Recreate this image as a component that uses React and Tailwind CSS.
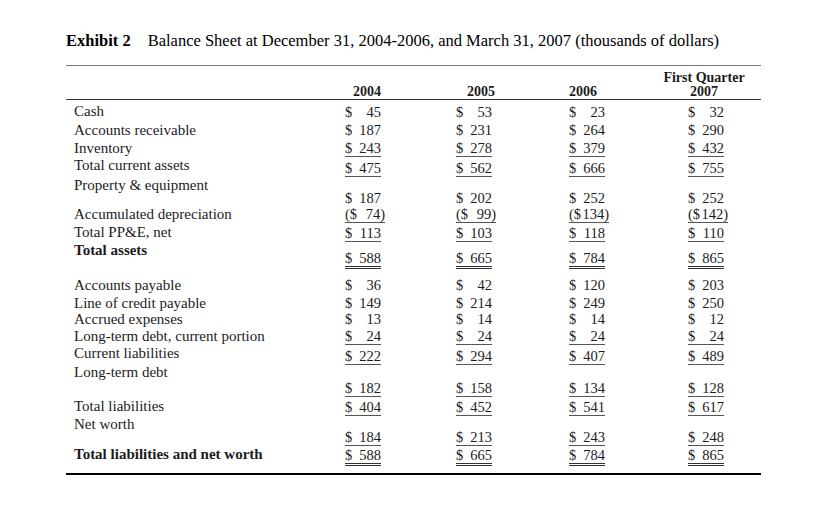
const rows = [
  { label: 'Cash', vals: ['45', '53', '23', '32'], row: 'h-[21px]', lt: 'mt-[3px]', vt: 'mt-[4px]' },
  { label: 'Accounts receivable', vals: ['187', '231', '264', '290'], row: 'h-[18px]', lt: 'mt-[1px]', vt: 'mt-[1px]' },
  { label: 'Inventory', vals: ['243', '278', '379', '432'], ul: 1, row: 'h-[18px]', lt: 'mt-[1px]', vt: 'mt-[1px]' },
  { label: 'Total current assets', vals: ['475', '562', '666', '755'], ul: 1, row: 'h-[19px]', lt: 'mt-[0px]', vt: 'mt-[3px]' },
  { label: 'Property & equipment', row: 'h-[14px]', lt: 'mt-[1px]' },
  { vals: ['187', '202', '252', '252'], row: 'h-[15px]', vt: 'mt-[0px]' },
  { label: 'Accumulated depreciation', vals: ['-\u00a074', '-\u00a099', '-134', '-142'], ul: 1, row: 'h-[18px]', lt: 'mt-[1px]', vt: 'mt-[1px]' },
  { label: 'Total PP&E, net', vals: ['113', '103', '118', '110'], ul: 1, row: 'h-[18px]', lt: 'mt-[1px]', vt: 'mt-[2px]' },
  { label: 'Total assets', bold: true, vals: ['588', '665', '784', '865'], ul: 2, row: 'h-[35px]', lt: 'mt-[1px]', vt: 'mt-[9px]' },
  { label: 'Accounts payable', vals: ['36', '42', '120', '203'], row: 'h-[18px]', lt: 'mt-[1px]', vt: 'mt-[1px]' },
  { label: 'Line of credit payable', vals: ['149', '214', '249', '250'], row: 'h-[17px]', lt: 'mt-[1px]', vt: 'mt-[1px]' },
  { label: 'Accrued expenses', vals: ['13', '14', '14', '12'], row: 'h-[16px]', lt: 'mt-[0px]', vt: 'mt-[0px]' },
  { label: 'Long-term debt, current portion', vals: ['24', '24', '24', '24'], ul: 1, row: 'h-[18px]', lt: 'mt-[1px]', vt: 'mt-[1px]' },
  { label: 'Current liabilities', vals: ['222', '294', '407', '489'], ul: 1, row: 'h-[19px]', lt: 'mt-[0px]', vt: 'mt-[3px]' },
  { label: 'Long-term debt', row: 'h-[16px]', lt: 'mt-[0px]' },
  { vals: ['182', '158', '134', '128'], ul: 1, row: 'h-[17px]', vt: 'mt-[0px]' },
  { label: 'Total liabilities', vals: ['404', '452', '541', '617'], ul: 1, row: 'h-[18px]', lt: 'mt-[1px]', vt: 'mt-[2px]' },
  { label: 'Net worth', vals: ['184', '213', '243', '248'], ul: 1, row: 'h-[31px]', lt: 'mt-[1px]', vt: 'mt-[14px]' },
  { label: 'Total liabilities and net worth', bold: true, vals: ['588', '665', '784', '865'], ul: 2, row: 'h-[19px]', lt: 'mt-[0px]', vt: 'mt-[1px]' },
]

const Amount = ({ v, ul }) => {
  const neg = v.startsWith('-')
  const line =
    ul === 2
      ? 'border-b-[3px] border-double border-[#333]'
      : ul === 1
        ? 'border-b border-[#555]'
        : 'border-b border-transparent'
  return (
    <div className={`flex justify-between leading-[16px] ${neg ? 'w-[40px]' : 'w-[36px]'} ${line}`}>
      <span>{neg ? '($' : '$'}</span>
      <span className="whitespace-pre">{neg ? v.slice(1) + ')' : v}</span>
    </div>
  )
}

const App = () => {
  return (
    <div
      className="h-[516px] w-[836px] bg-white pl-[66px] pt-[31px] text-[#1c1c1c]"
      style={{ fontFamily: '"Liberation Serif", "Times New Roman", serif' }}
    >
      {/* Titel */}
      <div className="flex h-[20px] items-center text-[16.5px] text-black">
        <span className="font-bold">Exhibit 2</span>
        <span className="ml-[17px]">
          Balance Sheet at December 31, 2004-2006, and March 31, 2007 (thousands of dollars)
        </span>
      </div>

      <div className="mt-[14px] w-[695px] border-t border-[#777]">
        {/* Kopfzeile */}
        <div className="grid h-[34px] grid-cols-[279px_111px_113px_119px_73px] items-end border-b border-[#333] text-[14px] font-bold leading-[14px]">
          <div />
          <div className="ml-[8px]">2004</div>
          <div className="ml-[11px]">2005</div>
          <div>2006</div>
          <div className="-ml-[30px] flex w-[92px] flex-col items-center whitespace-nowrap">
            <span>First Quarter</span>
            <span>2007</span>
          </div>
        </div>

        {rows.map((r, i) => (
          <div
            key={i}
            className={`grid grid-cols-[279px_111px_113px_119px_73px] items-start ${r.row}`}
          >
            <div className={`pl-[8px] text-[15px] leading-[16px] ${r.bold ? 'font-bold' : ''} ${r.lt || ''}`}>
              {r.label}
            </div>
            {[0, 1, 2, 3].map((c) => (
              <div key={c} className={`text-[14.5px] ${r.vt || ''}`}>
                {r.vals && <Amount v={r.vals[c]} ul={r.ul} />}
              </div>
            ))}
          </div>
        ))}

        <div className="mt-[8px] border-t-2 border-black" />
      </div>
    </div>
  )
}

export default App
